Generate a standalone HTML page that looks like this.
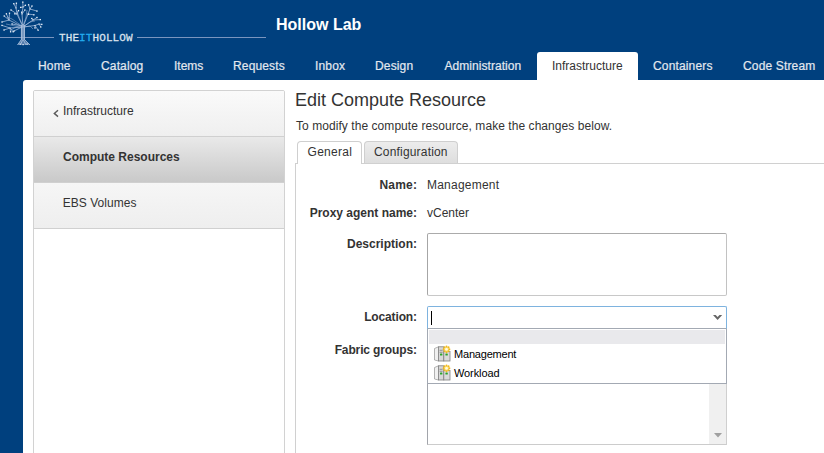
<!DOCTYPE html>
<html><head><meta charset="utf-8">
<style>
*{box-sizing:border-box}
html,body{margin:0;padding:0}
body{width:824px;height:453px;overflow:hidden;position:relative;background:#00407e;font-family:"Liberation Sans",sans-serif;}
.a{position:absolute;white-space:nowrap;line-height:1}
.nav{font-size:12px;color:#e3e8ef;top:60px;letter-spacing:0.15px;-webkit-text-stroke:0.2px currentColor}
.content{position:absolute;left:23px;top:80px;width:820px;height:400px;background:#fff;border-top-left-radius:3px}
.side{position:absolute;left:33px;top:90px;width:252px;height:380px;border:1px solid #d2d2d2;border-radius:2px 2px 0 0;background:#fff;overflow:hidden}
.si{position:absolute;left:0;width:250px;height:46px;border-bottom:1px solid #d0d0d0}
.lbl{font-size:12px;font-weight:bold;color:#333;text-align:right}
.val{font-size:12px;color:#333}
</style></head><body>
<!-- logo -->
<svg class="a" style="left:0;top:0" width="270" height="50" viewBox="0 0 270 50">
  <g stroke="#7a95bf" stroke-width="1" fill="none">
    <line x1="0" y1="37.5" x2="54" y2="37.5"/>
    <line x1="137" y1="37.5" x2="266" y2="37.5"/>
  </g>
  <g stroke="#98b1d6" stroke-width="0.7" fill="none" opacity="0.8"><path d="M22 26 L12 19 L7 17"/><path d="M22.5 25 L19 17 L17 11"/><path d="M23.5 25 L26 17 L27 10"/><path d="M24 26 L30 22 L35 21"/><path d="M22 27.5 L6 24"/><path d="M23 27 L16 27 L11 30"/><path d="M24.5 27 L30 26 L33 29"/></g>
  <g stroke="#a9bfdf" stroke-width="0.85" fill="none" opacity="0.9"><path d="M23 27 L9 20"/><path d="M23 27 L10 28"/><path d="M23 27 L17 14"/><path d="M23 27 L22 14"/><path d="M23 27 L28 14"/><path d="M23 27 L33 20"/><path d="M23 27 L35 25.5"/><path d="M22 27 L14 31"/><path d="M22.5 26 L12 24"/><path d="M9 20 L4.2 16"/><path d="M9 20 L6.4 13.8"/><path d="M9 20 L2 22"/><path d="M9 20 L9.5 13.2"/><path d="M10 28 L4 30"/><path d="M10 28 L10.6 31.8"/><path d="M10 28 L2 25.4"/><path d="M10 28 L13.2 31.8"/><path d="M17 14 L16 8"/><path d="M16 8 L13.8 3.7"/><path d="M16 8 L16.4 3.2"/><path d="M17 14 L18.5 10.6"/><path d="M17 14 L14.8 13.8"/><path d="M17 14 L11 10"/><path d="M22 14 L23 7"/><path d="M23 7 L22.8 2.1"/><path d="M23 7 L20.7 7.4"/><path d="M22 14 L21.7 12.2"/><path d="M22 14 L24.9 10"/><path d="M23 7 L25.4 5.3"/><path d="M28 14 L30 9"/><path d="M30 9 L28.6 4.8"/><path d="M30 9 L32 6"/><path d="M28 14 L28.6 14.3"/><path d="M28 14 L33.9 14.8"/><path d="M30 9 L37 11.1"/><path d="M33 20 L31.8 18.5"/><path d="M33 20 L37 17.5"/><path d="M33 20 L40.3 19.6"/><path d="M35 25.5 L39 24"/><path d="M39 24 L41.8 24.4"/><path d="M39 24 L40.8 27"/><path d="M35 25.5 L38.1 30.2"/><path d="M35 25.5 L35 28"/></g>
  <path d="M20.8 25 H25 V40 L30 45 H17.5 L20.8 40 Z" fill="#7896c2" opacity="0.7"/>
  <g stroke="#b3c6e0" stroke-width="0.8" fill="none">
    <path d="M21.5 25 V40 M23 24 V40 M24.5 25 V40"/>
    <path d="M21 40 L17.5 45 M22.5 40 L20.5 45 M23.5 40 L26 45 M25 40 L30 45"/>
  </g>
  <g fill="#f2f6fc"><rect x="41.15" y="23.75" width="1.3" height="1.3"/><rect x="27.95" y="4.15" width="1.3" height="1.3"/><rect x="8.85" y="12.55" width="1.3" height="1.3"/><rect x="9.95" y="31.15" width="1.3" height="1.3"/><rect x="31.35" y="5.35" width="1.3" height="1.3"/><rect x="5.75" y="13.15" width="1.3" height="1.3"/><rect x="13.35" y="30.35" width="1.3" height="1.3"/><rect x="3.35" y="29.35" width="1.3" height="1.3"/><rect x="33.25" y="14.15" width="1.3" height="1.3"/><rect x="13.15" y="3.05" width="1.3" height="1.3"/><rect x="20.05" y="6.75" width="1.3" height="1.3"/><rect x="24.75" y="4.65" width="1.3" height="1.3"/><rect x="12.55" y="31.15" width="1.3" height="1.3"/><rect x="37.45" y="29.55" width="1.3" height="1.3"/><rect x="11.35" y="23.35" width="1.3" height="1.3"/><rect x="27.95" y="13.65" width="1.3" height="1.3"/><rect x="36.35" y="16.85" width="1.3" height="1.3"/><rect x="39.65" y="18.95" width="1.3" height="1.3"/><rect x="17.85" y="9.95" width="1.3" height="1.3"/><rect x="31.15" y="17.85" width="1.3" height="1.3"/><rect x="10.35" y="9.35" width="1.3" height="1.3"/><rect x="40.15" y="26.35" width="1.3" height="1.3"/><rect x="1.35" y="21.35" width="1.3" height="1.3"/><rect x="22.15" y="1.45" width="1.3" height="1.3"/><rect x="24.25" y="9.35" width="1.3" height="1.3"/><rect x="34.35" y="27.35" width="1.3" height="1.3"/><rect x="15.75" y="2.55" width="1.3" height="1.3"/><rect x="21.05" y="11.55" width="1.3" height="1.3"/><rect x="14.15" y="13.15" width="1.3" height="1.3"/><rect x="1.35" y="24.75" width="1.3" height="1.3"/><rect x="3.55" y="15.35" width="1.3" height="1.3"/><rect x="36.35" y="10.45" width="1.3" height="1.3"/><rect x="8.45" y="19.45" width="1.1" height="1.1" opacity="0.8"/><rect x="9.45" y="27.45" width="1.1" height="1.1" opacity="0.8"/><rect x="16.45" y="13.45" width="1.1" height="1.1" opacity="0.8"/><rect x="15.45" y="7.45" width="1.1" height="1.1" opacity="0.8"/><rect x="21.45" y="13.45" width="1.1" height="1.1" opacity="0.8"/><rect x="22.45" y="6.45" width="1.1" height="1.1" opacity="0.8"/><rect x="27.45" y="13.45" width="1.1" height="1.1" opacity="0.8"/><rect x="29.45" y="8.45" width="1.1" height="1.1" opacity="0.8"/><rect x="32.45" y="19.45" width="1.1" height="1.1" opacity="0.8"/><rect x="34.45" y="24.95" width="1.1" height="1.1" opacity="0.8"/><rect x="38.45" y="23.45" width="1.1" height="1.1" opacity="0.8"/><rect x="19.5" y="43.5" width="1.2" height="1.2"/><rect x="22.5" y="44" width="1.2" height="1.2"/><rect x="26.5" y="43.5" width="1.2" height="1.2"/></g>
</svg>
<div class="a" style="left:59px;top:33px;transform:scaleY(1.06);transform-origin:0 0;font-family:'Liberation Mono',monospace;font-size:11px;color:#dde5ef;letter-spacing:0.1px;-webkit-text-stroke:0.25px currentColor">THE<span style="color:#22aef0">IT</span>HOLLOW</div>
<div class="a" style="left:276px;top:17px;font-size:16px;font-weight:bold;color:#fff">Hollow Lab</div>

<!-- nav -->
<div class="a nav" style="left:38px">Home</div>
<div class="a nav" style="left:101px">Catalog</div>
<div class="a nav" style="left:174px;letter-spacing:0">Items</div>
<div class="a nav" style="left:233px">Requests</div>
<div class="a nav" style="left:315px">Inbox</div>
<div class="a nav" style="left:375px">Design</div>
<div class="a nav" style="left:444.5px;letter-spacing:0.05px">Administration</div>
<div class="a" style="left:537px;top:52px;width:101px;height:30px;background:#fff;border-radius:3px 3px 0 0"></div>
<div class="a nav" style="left:552px;color:#333;letter-spacing:0;-webkit-text-stroke:0">Infrastructure</div>
<div class="a nav" style="left:653px">Containers</div>
<div class="a nav" style="left:743px">Code Stream</div>

<div class="content"></div>

<!-- sidebar -->
<div class="side">
  <div class="si" style="top:0;background:linear-gradient(#fafafa,#efefef)"></div>
  <div class="si" style="top:46px;background:linear-gradient(#e9e9e9,#c9c9c9)"></div>
  <div class="si" style="top:92px;background:linear-gradient(#f6f6f6,#eeeeee)"></div>
</div>
<svg class="a" style="left:50px;top:106px" width="12" height="14"><path d="M8 4.2L4.3 7.4L8 10.6" stroke="#5a5a5a" stroke-width="1.4" fill="none"/></svg>
<div class="a val" style="left:63px;top:105px">Infrastructure</div>
<div class="a val" style="left:63px;top:151px;font-weight:bold">Compute Resources</div>
<div class="a val" style="left:62.7px;top:197px;letter-spacing:0.05px">EBS Volumes</div>

<!-- main -->
<div class="a" style="left:295px;top:91px;font-size:18px;color:#333">Edit Compute Resource</div>
<div class="a val" style="left:296px;top:120px;letter-spacing:0.06px">To modify the compute resource, make the changes below.</div>

<div class="a" style="left:295px;top:163px;width:540px;height:300px;border:1px solid #d0d0d0;border-right:none;border-bottom:none"></div>
<div class="a" style="left:297px;top:141px;width:65px;height:23px;border:1px solid #cfcfcf;border-bottom:none;border-radius:4px 4px 0 0;background:#fff"></div>
<div class="a val" style="left:307.5px;top:146px;letter-spacing:0.3px">General</div>
<div class="a" style="left:364px;top:141px;width:94px;height:22px;border:1px solid #cfcfcf;border-bottom:none;border-radius:4px 4px 0 0;background:linear-gradient(#ececec,#dedede)"></div>
<div class="a val" style="left:374px;top:146px;letter-spacing:0.18px">Configuration</div>

<div class="a lbl" style="left:200px;width:217.2px;top:179px;letter-spacing:0.2px">Name:</div>
<div class="a val" style="left:427px;top:179px;letter-spacing:0.22px">Management</div>
<div class="a lbl" style="left:200px;width:217px;top:207px">Proxy agent name:</div>
<div class="a val" style="left:427px;top:207px">vCenter</div>
<div class="a lbl" style="left:200px;width:217px;top:238px">Description:</div>
<div class="a" style="left:427px;top:233px;width:300px;height:63px;border:1px solid;border-color:#ababab #c2c2c2 #c8c8c8 #a6a6a6;border-radius:2px"></div>
<div class="a lbl" style="left:200px;width:216.85px;top:311px;letter-spacing:-0.15px">Location:</div>
<div class="a lbl" style="left:200px;width:216.87px;top:344px;letter-spacing:-0.13px">Fabric groups:</div>

<!-- fabric list -->
<div class="a" style="left:427px;top:383px;width:300px;height:62px;border:1px solid;border-color:#c8c8c8 #cfcfcf #cccccc #a2a5ab;border-top:none"></div>
<div class="a" style="left:709px;top:383px;width:17px;height:61px;background:#f0f0f0"></div>
<svg class="a" style="left:714px;top:433px" width="8" height="5"><path d="M0 0H8L4 4.5Z" fill="#a0a0a0"/></svg>

<!-- dropdown -->
<div class="a" style="left:427px;top:328px;width:300px;height:56px;border:1px solid #a3a9b3;background:#fff"></div>
<div class="a" style="left:429px;top:330px;width:296px;height:14px;background:#e9e9ec"></div>
<svg class="a" style="left:431px;top:343px" width="22" height="20" viewBox="0 0 22 20">
  <path d="M3.5 5.5 L7.5 3.8 L7.5 18 L3.5 17 Z" fill="#f0f0f0" stroke="#a0a0a0" stroke-width="0.8"/>
  <rect x="7.5" y="3.8" width="5.3" height="14.2" fill="#d8d8d8" stroke="#808080" stroke-width="0.8"/>
  <rect x="8.6" y="6.8" width="3" height="0.9" fill="#8a8a8a"/>
  <rect x="8.6" y="8.8" width="3" height="0.9" fill="#8a8a8a"/>
  <rect x="9" y="10.6" width="2.4" height="2" rx="0.6" fill="#2aa52a"/>
  <rect x="12.8" y="8.5" width="6.2" height="9.5" fill="#dadada" stroke="#808080" stroke-width="0.8"/>
  <rect x="14.4" y="10.6" width="2.4" height="2" rx="0.6" fill="#2aa52a"/>
  <circle cx="15.5" cy="6.3" r="2.6" fill="#ffe680"/><circle cx="18.40" cy="6.30" r="1" fill="#f0b820"/><circle cx="17.55" cy="8.35" r="1" fill="#f0b820"/><circle cx="15.50" cy="9.20" r="1" fill="#f0b820"/><circle cx="13.45" cy="8.35" r="1" fill="#f0b820"/><circle cx="12.60" cy="6.30" r="1" fill="#f0b820"/><circle cx="13.45" cy="4.25" r="1" fill="#f0b820"/><circle cx="15.50" cy="3.40" r="1" fill="#f0b820"/><circle cx="17.55" cy="4.25" r="1" fill="#f0b820"/><circle cx="15.5" cy="6.3" r="1.2" fill="#fffbe8"/>
</svg>
<div class="a" style="left:454px;top:349px;font-size:11px;color:#000;letter-spacing:-0.2px">Management</div>
<svg class="a" style="left:431px;top:362px" width="22" height="20" viewBox="0 0 22 20">
  <path d="M3.5 5.5 L7.5 3.8 L7.5 18 L3.5 17 Z" fill="#f0f0f0" stroke="#a0a0a0" stroke-width="0.8"/>
  <rect x="7.5" y="3.8" width="5.3" height="14.2" fill="#d8d8d8" stroke="#808080" stroke-width="0.8"/>
  <rect x="8.6" y="6.8" width="3" height="0.9" fill="#8a8a8a"/>
  <rect x="8.6" y="8.8" width="3" height="0.9" fill="#8a8a8a"/>
  <rect x="9" y="10.6" width="2.4" height="2" rx="0.6" fill="#2aa52a"/>
  <rect x="12.8" y="8.5" width="6.2" height="9.5" fill="#dadada" stroke="#808080" stroke-width="0.8"/>
  <rect x="14.4" y="10.6" width="2.4" height="2" rx="0.6" fill="#2aa52a"/>
  <circle cx="15.5" cy="6.3" r="2.6" fill="#ffe680"/><circle cx="18.40" cy="6.30" r="1" fill="#f0b820"/><circle cx="17.55" cy="8.35" r="1" fill="#f0b820"/><circle cx="15.50" cy="9.20" r="1" fill="#f0b820"/><circle cx="13.45" cy="8.35" r="1" fill="#f0b820"/><circle cx="12.60" cy="6.30" r="1" fill="#f0b820"/><circle cx="13.45" cy="4.25" r="1" fill="#f0b820"/><circle cx="15.50" cy="3.40" r="1" fill="#f0b820"/><circle cx="17.55" cy="4.25" r="1" fill="#f0b820"/><circle cx="15.5" cy="6.3" r="1.2" fill="#fffbe8"/>
</svg>
<div class="a" style="left:454px;top:368px;font-size:11px;color:#000;letter-spacing:-0.1px">Workload</div>
<!-- location select -->
<div class="a" style="left:427px;top:306px;width:300px;height:23px;border:1px solid #7eb3df;border-bottom-color:#a3a9b3;border-radius:2px 2px 0 0;background:#fff"></div>
<div class="a" style="left:431px;top:311px;width:1px;height:14px;background:#000"></div>
<svg class="a" style="left:705px;top:305px" width="20" height="20"><path d="M8 9.9H10.7L12.6 12.1L14.5 9.9H17.2L12.6 15.1Z" fill="#666"/></svg>
</body></html>
